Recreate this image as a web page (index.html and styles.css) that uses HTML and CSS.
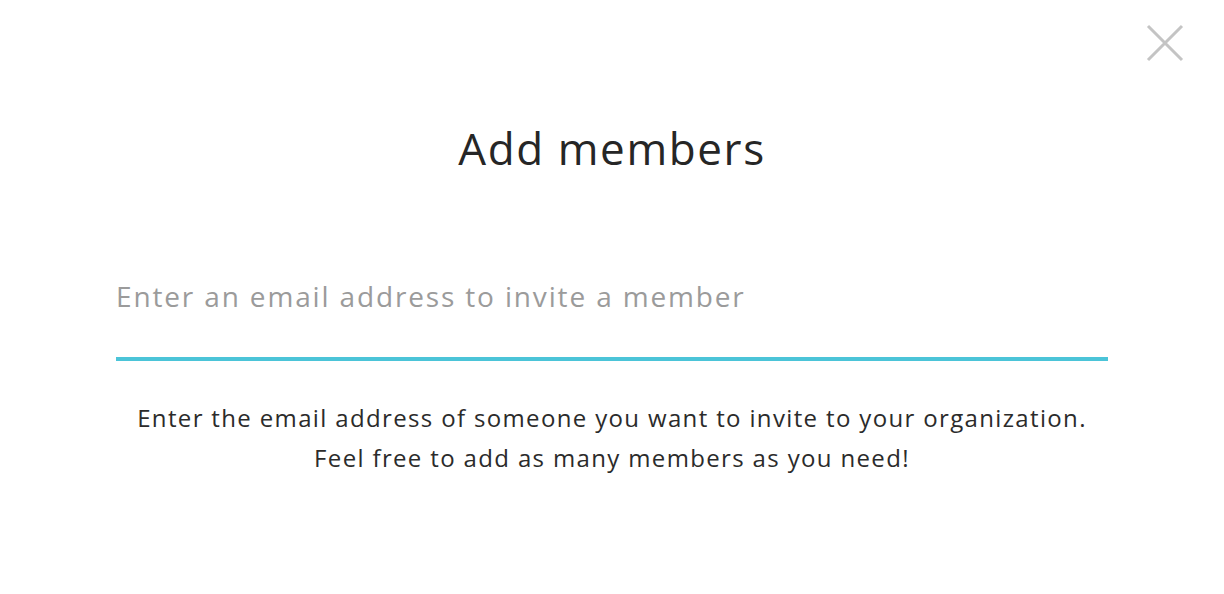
FILE: index.html
```html
<!DOCTYPE html>
<html lang="en">
<head>
    <meta charset="UTF-8">
    <title>Add members</title>
    <meta name="viewport" content="width=device-width, initial-scale=1.0">
    <link rel="stylesheet" href="styles.css">
</head>
<body>
    <div class="modal">
        <button class="close" aria-label="Close">
            <svg width="38" height="38" viewBox="0 0 38 38">
                <path d="M2 2 L36 36 M36 2 L2 36" stroke="#c4c4c4" stroke-width="3" fill="none"/>
            </svg>
        </button>

        <h1>Add members</h1>

        <div class="invite">
            <input type="text" class="email" placeholder="Enter an email address to invite a member">
        </div>

        <p class="hint">
            Enter the email address of someone you want to invite to your organization.<br>
            Feel free to add as many members as you need!
        </p>
    </div>
</body>
</html>
```

FILE: styles.css
```css
body {
    margin: 0;
    font-family: "Open Sans", Lato, sans-serif;
    background: white;
    color: #262626;
}
.modal {
    position: relative;
    height: 594px;
    padding: 0 116px;
    box-sizing: border-box;
    display: flex;
    flex-direction: column;
    align-items: center;
}
.close {
    position: absolute;
    top: 24px;
    right: 40px;
    width: 38px;
    height: 38px;
    padding: 0;
    border: none;
    background: none;
    cursor: pointer;
}
h1 {
    margin: 120px 0 0;
    font-size: 44px;
    font-weight: 400;
    line-height: 56px;
    letter-spacing: 1.6px;
}
.invite {
    width: 100%;
    margin-top: 100px;
}
.email {
    width: 100%;
    box-sizing: border-box;
    padding: 0 0 41px;
    border: none;
    border-bottom: 4px solid #4bc4d8;
    font-family: inherit;
    font-size: 28px;
    line-height: 40px;
    letter-spacing: 1.85px;
    color: #333;
    outline: none;
}
.email::placeholder {
    color: #9b9b9b;
}
.hint {
    margin: 37px 0 0;
    text-align: center;
    font-size: 24px;
    line-height: 40px;
    letter-spacing: 1.35px;
    color: #2b2b2b;
}
```
